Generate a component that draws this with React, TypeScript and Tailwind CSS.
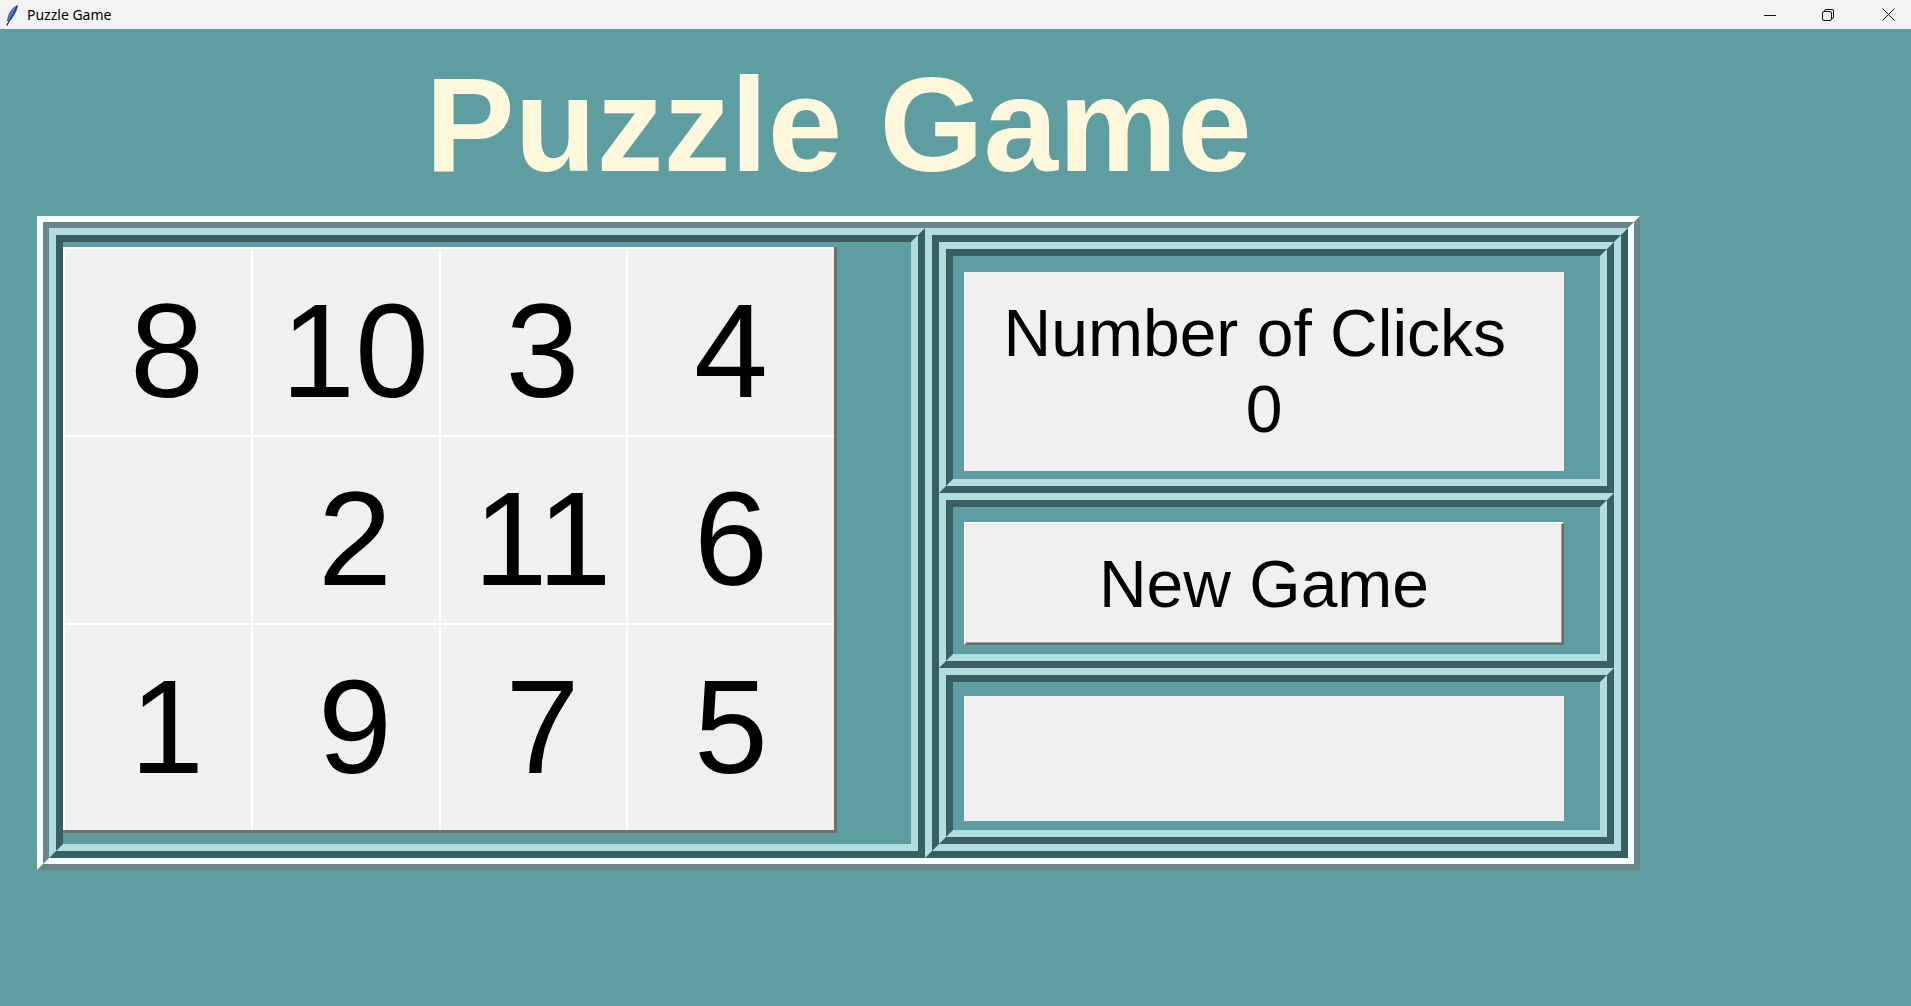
import React from 'react'

const tiles = [
  ['8', '10', '3', '4'],
  ['', '2', '11', '6'],
  ['1', '9', '7', '5'],
]

// tk "ridge" relief, drawn as two nested borders
const tealOut = 'border-[7px] border-t-[#afdde0] border-l-[#afdde0] border-r-[#395f60] border-b-[#395f60]'
const tealIn = 'border-[7px] border-t-[#395f60] border-l-[#395f60] border-r-[#afdde0] border-b-[#afdde0]'

const Feather = () => (
  <svg width="14" height="22" viewBox="0 0 14 22">
    <path d="M12.5 1.5 C 7 4, 3.5 9, 2.5 17 L 4 17.5 C 8 13, 11.5 8, 12.5 1.5 Z" fill="#4a7fd6" stroke="#1f3e7a" strokeWidth="0.8" />
    <path d="M12 2.5 L 3 19.5" stroke="#1c2f5c" strokeWidth="1" />
    <path d="M3 19 L 1.8 21.5" stroke="#222" strokeWidth="1.2" />
  </svg>
)

const TitleBar = () => (
  <div className="h-[29px] bg-[#f3f3f3] flex items-center shrink-0">
    <div className="pl-[5px] w-[27px] flex items-center">
      <Feather />
    </div>
    <p className="text-[14px] text-black font-['Noto_Sans',sans-serif]">Puzzle Game</p>
    <div className="ml-auto flex items-center h-full">
      <div className="w-[58px] h-full flex items-center justify-center">
        <svg width="12" height="12" viewBox="0 0 12 12"><path d="M0 6.5 H12" stroke="#111" strokeWidth="1" /></svg>
      </div>
      <div className="w-[58px] mr-[8px] h-full flex items-center justify-center">
        <svg width="12" height="12" viewBox="0 0 12 12">
          <rect x="0.5" y="2.5" width="9" height="9" rx="1.5" fill="none" stroke="#111" strokeWidth="1" />
          <path d="M2.5 2.5 V2 a1.5 1.5 0 0 1 1.5 -1.5 H10 a1.5 1.5 0 0 1 1.5 1.5 V8 a1.5 1.5 0 0 1 -1.5 1.5 H9.5" fill="none" stroke="#111" strokeWidth="1" />
        </svg>
      </div>
      <div className="w-[46px] h-full flex items-center justify-center">
        <svg width="13" height="13" viewBox="0 0 13 13"><path d="M0.5 0.5 L12.5 12.5 M12.5 0.5 L0.5 12.5" stroke="#111" strokeWidth="1" /></svg>
      </div>
    </div>
  </div>
)

const Board = () => (
  <div className="grid grid-cols-[188px_188px_187px_208px] grid-rows-[188px_188px_207px] border-r-[3px] border-b-[3px] border-r-[#6f6f6f] border-b-[#6f6f6f] w-fit">
    {tiles.map((row, r) =>
      row.map((n, c) => (
        <div
          key={`${r}-${c}`}
          className={`bg-[#f0f0f0] border-l-2 border-t-2 border-white flex items-center justify-center text-[133px] leading-none text-black ${c < 3 ? 'pl-[18px]' : ''} ${r < 2 ? 'pt-[18px]' : ''}`}
        >
          {n}
        </div>
      ))
    )}
  </div>
)

const App = () => {
  return (
    <div className="w-[1911px] h-[1006px] bg-[#5f9ea0] flex flex-col overflow-hidden font-['Liberation_Sans',Arial,sans-serif]">
      <TitleBar />
      <div className="pl-[37px] flex">
        <div className="flex flex-col items-center">
          <h1 className="mt-[19px] h-[154px] text-[134px] leading-[154px] font-bold text-[#fff8dc]">Puzzle Game</h1>
          <div className="mt-[14px] w-[1603px] h-[654px] border-[6px] border-t-[#f6ffff] border-l-[#f6ffff] border-r-[#6a868a] border-b-[#6a868a]">
            <div className="w-full h-full border-[6px] border-t-[#6a868a] border-l-[#6a868a] border-r-[#f6ffff] border-b-[#f6ffff] flex">
              {/* puzzle */}
              <div className={`w-[876px] h-full ${tealOut}`}>
                <div className={`w-full h-full ${tealIn} pt-[5px]`}>
                  <Board />
                </div>
              </div>
              {/* side panel */}
              <div className={`w-[703px] h-full ${tealOut}`}>
                <div className={`w-full h-full ${tealIn} flex flex-col`}>
                  <div className={`h-[251px] ${tealOut}`}>
                    <div className={`h-full ${tealIn} pt-[16px] pl-[11px]`}>
                      <div className="w-[600px] h-[199px] bg-[#f0f0f0] flex items-center justify-center text-center text-[66px] leading-[1.14] text-black whitespace-pre">
                        {'Number of Clicks \n0'}
                      </div>
                    </div>
                  </div>
                  <div className={`h-[175px] ${tealOut}`}>
                    <div className={`h-full ${tealIn} pt-[15px] pl-[11px]`}>
                      <button className="w-[600px] h-[123px] bg-[#f0f0f0] border-2 border-t-white border-l-white border-r-[#696969] border-b-[#696969] shadow-[inset_-1px_-1px_0_#a0a0a0,inset_1px_1px_0_#e3e3e3] flex items-center justify-center text-[66px] leading-none text-black">
                        New Game
                      </button>
                    </div>
                  </div>
                  <div className={`h-[176px] ${tealOut}`}>
                    <div className={`h-full ${tealIn} pt-[14px] pl-[11px]`}>
                      <div className="w-[600px] h-[125px] bg-[#f0f0f0]" />
                    </div>
                  </div>
                </div>
              </div>
            </div>
          </div>
        </div>
      </div>
    </div>
  )
}

export default App
